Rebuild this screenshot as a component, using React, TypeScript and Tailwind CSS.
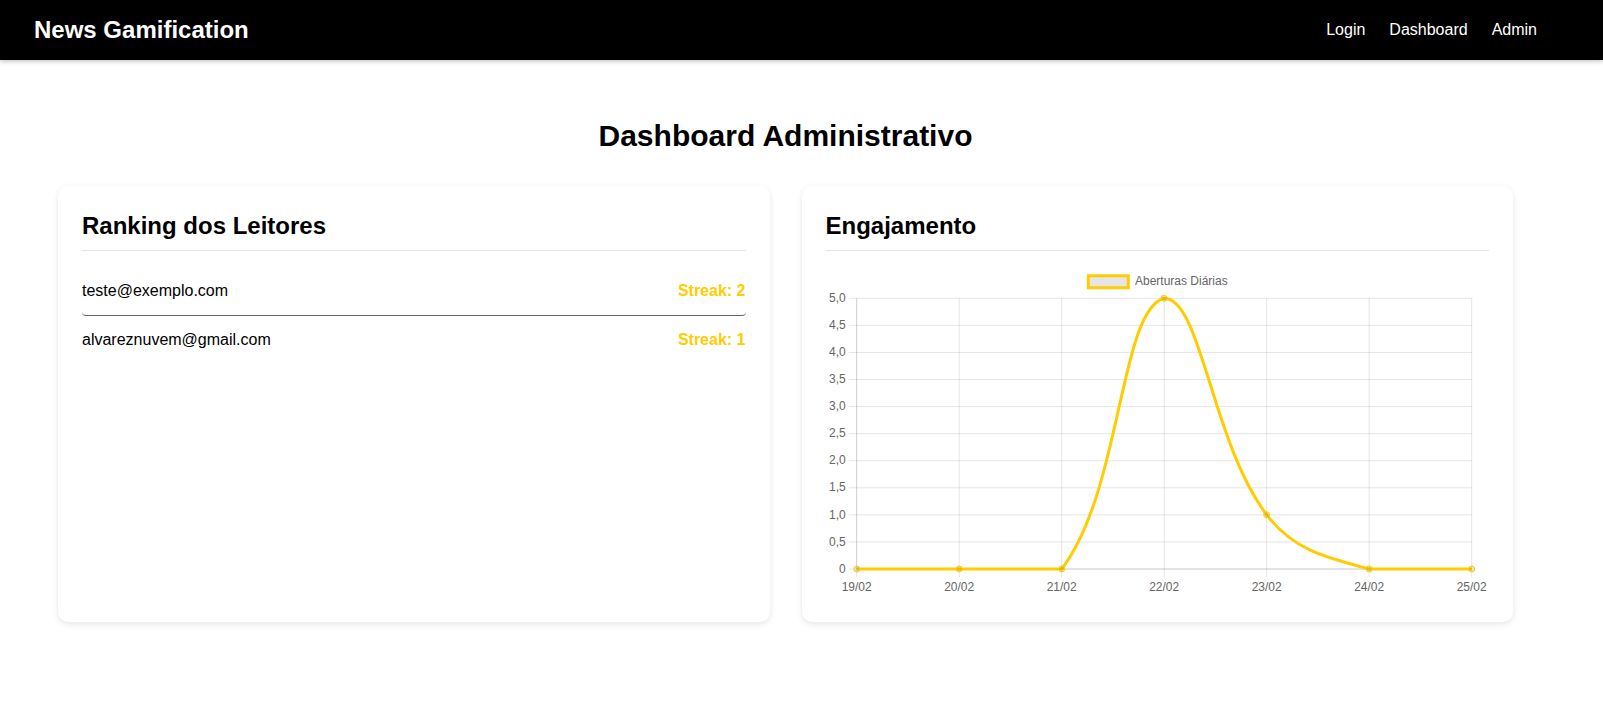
import React from 'react';

const readers = [
  { email: 'teste@exemplo.com', streak: 2 },
  { email: 'alvareznuvem@gmail.com', streak: 1 },
];

const labels = ['19/02', '20/02', '21/02', '22/02', '23/02', '24/02', '25/02'];
const values = [0, 0, 0, 5, 1, 0, 0];

// chart area inside the svg (px)
const area = { left: 30.7, right: 645.7, top: 38.3, bottom: 309 };
const maxY = 5;

function buildPath() {
  const step = (area.right - area.left) / (values.length - 1);
  const pts = values.map((v, i) => ({
    x: area.left + i * step,
    y: area.bottom - (v / maxY) * (area.bottom - area.top),
  }));
  const t = 0.4;
  const cap = (v: number, min: number, max: number) => Math.max(Math.min(v, max), min);
  const ctrl = pts.map((cur, i) => {
    const prev = pts[i - 1] || cur;
    const next = pts[i + 1] || cur;
    const d01 = Math.hypot(cur.x - prev.x, cur.y - prev.y);
    const d12 = Math.hypot(next.x - cur.x, next.y - cur.y);
    let s01 = d01 / (d01 + d12);
    let s12 = d12 / (d01 + d12);
    s01 = isNaN(s01) ? 0 : s01;
    s12 = isNaN(s12) ? 0 : s12;
    const fa = t * s01;
    const fb = t * s12;
    return {
      p: {
        x: cap(cur.x - fa * (next.x - prev.x), area.left, area.right),
        y: cap(cur.y - fa * (next.y - prev.y), area.top, area.bottom),
      },
      n: {
        x: cap(cur.x + fb * (next.x - prev.x), area.left, area.right),
        y: cap(cur.y + fb * (next.y - prev.y), area.top, area.bottom),
      },
    };
  });
  let d = `M${pts[0].x},${pts[0].y}`;
  for (let i = 1; i < pts.length; i++) {
    d += ` C${ctrl[i - 1].n.x},${ctrl[i - 1].n.y} ${ctrl[i].p.x},${ctrl[i].p.y} ${pts[i].x},${pts[i].y}`;
  }
  return { d, pts, step };
}

function EngagementChart() {
  const { d, pts, step } = buildPath();
  const yTicks = ['0', '0,5', '1,0', '1,5', '2,0', '2,5', '3,0', '3,5', '4,0', '4,5', '5,0'];
  const rowH = (area.bottom - area.top) / (yTicks.length - 1);
  const grid = 'rgba(0,0,0,0.1)';
  return (
    <svg width="100%" height={338} className="block" style={{ fontFamily: "'Liberation Sans', Arial, sans-serif" }}>
      {/* legend */}
      <rect x={262.3} y={15.8} width={40} height={12} fill="rgba(0,0,0,0.1)" stroke="#ffcc00" strokeWidth={3} />
      <text x={309} y={22.3} fontSize={12} fill="#666" dominantBaseline="middle">
        Aberturas Diárias
      </text>

      {/* horizontal grid + y labels */}
      {yTicks.map((lbl, i) => {
        const y = area.bottom - i * rowH;
        return (
          <g key={lbl}>
            <line x1={area.left - 8} x2={area.right} y1={y} y2={y} stroke={grid} strokeWidth={1} />
            <text x={19.7} y={y + 0.5} fontSize={12} fill="#666" textAnchor="end" dominantBaseline="middle">
              {lbl}
            </text>
          </g>
        );
      })}

      {/* vertical grid + x labels */}
      {labels.map((lbl, i) => {
        const x = area.left + i * step;
        return (
          <g key={lbl}>
            <line x1={x} x2={x} y1={area.top} y2={area.bottom + 8} stroke={grid} strokeWidth={1} />
            <text x={x} y={327.5} fontSize={12} fill="#666" textAnchor="middle" dominantBaseline="middle">
              {lbl}
            </text>
          </g>
        );
      })}

      {/* axis borders */}
      <line x1={area.left} x2={area.left} y1={area.top} y2={area.bottom} stroke="rgba(0,0,0,0.1)" strokeWidth={1} />
      <line x1={area.left} x2={area.right} y1={area.bottom} y2={area.bottom} stroke="rgba(0,0,0,0.12)" strokeWidth={1} />

      <path d={d} fill="none" stroke="#ffcc00" strokeWidth={3} strokeLinejoin="round" />
      {pts.map((p, i) => (
        <circle key={i} cx={p.x} cy={p.y} r={3} fill="rgba(0,0,0,0.1)" stroke="#ffcc00" strokeWidth={1} />
      ))}
    </svg>
  );
}

export default function App() {
  return (
    <div className="min-h-screen bg-white font-['Liberation_Sans',Arial,sans-serif] text-black">
      <header className="h-[60px] bg-black flex items-center justify-between pl-[34px] pr-[66px] shadow-[0_2px_4px_rgba(0,0,0,0.2)] relative z-10">
        <span className="text-[24px] font-bold text-white">News Gamification</span>
        <nav className="flex items-center gap-6 text-[16px] text-white">
          <a href="#">Login</a>
          <a href="#">Dashboard</a>
          <a href="#">Admin</a>
        </nav>
      </header>

      <main className="pt-[58px] pl-[58px] pr-[90px]">
        <h1 className="text-[30px] leading-[36px] font-bold text-center mb-8">Dashboard Administrativo</h1>

        <div className="grid grid-cols-2 gap-8">
          <section className="bg-white rounded-[10px] shadow-[0_2px_6px_rgba(0,0,0,0.1)] pt-[26px] px-6 pb-6">
            <h2 className="text-[24px] leading-[28px] font-bold pb-[10px] border-b border-[#e5e5e5]">
              Ranking dos Leitores
            </h2>
            <ul className="mt-4">
              {readers.map((r, i) => (
                <li
                  key={r.email}
                  className={
                    i < readers.length - 1
                      ? 'flex items-center justify-between py-3 leading-6 border-b border-[#666] rounded-[4px]'
                      : 'flex items-center justify-between py-3 leading-6'
                  }
                >
                  <span className="text-[16px]">{r.email}</span>
                  <span className="text-[16px] font-bold text-[#ffcc00]">Streak: {r.streak}</span>
                </li>
              ))}
            </ul>
          </section>

          <section className="bg-white rounded-[10px] shadow-[0_2px_6px_rgba(0,0,0,0.1)] pt-[26px] px-6 pb-6">
            <h2 className="text-[24px] leading-[28px] font-bold pb-[10px] border-b border-[#e5e5e5]">Engajamento</h2>
            <div className="mt-[9px]">
              <EngagementChart />
            </div>
          </section>
        </div>
      </main>
    </div>
  );
}
